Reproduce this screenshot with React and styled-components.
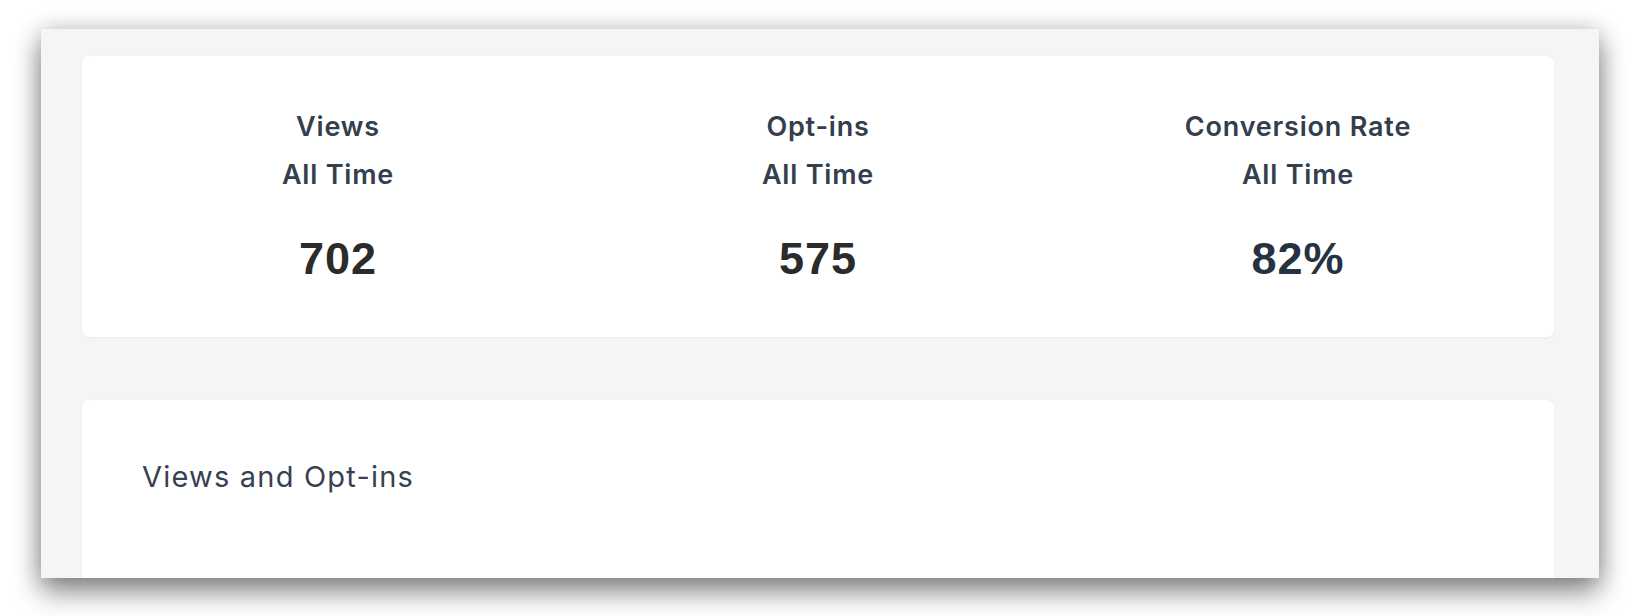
import React from "react";
import styled, { createGlobalStyle } from "styled-components";

const GlobalStyle = createGlobalStyle`
  html, body {
    margin: 0;
    padding: 0;
    background: #ffffff;
    font-family: Inter, "Noto Sans", sans-serif;
  }
`;

const Page = styled.div`
  height: 616px;
  padding: 29px 35px 0 41px;
  box-sizing: border-box;
  overflow: hidden;
`;

const Window = styled.div`
  height: 549px;
  box-sizing: border-box;
  background: #f4f5f7;
  padding: 27px 45px 0 41px;
  display: flex;
  flex-direction: column;
  gap: 63px;
  overflow: hidden;
  box-shadow: 0 14px 26px rgba(0, 0, 0, 0.45), 0 0 22px rgba(0, 0, 0, 0.18);
`;

const Card = styled.div`
  background: #ffffff;
  border-radius: 8px;
  box-shadow: 0 1px 3px rgba(0, 0, 0, 0.04);
`;

const StatsCard = styled(Card)`
  height: 281px;
  box-sizing: border-box;
  padding: 16px;
  display: grid;
  grid-template-columns: repeat(3, 1fr);
`;

const Stat = styled.div`
  padding-top: 31px;
  text-align: center;
`;

const Label = styled.div`
  font-size: 27px;
  font-weight: 600;
  line-height: 48px;
  letter-spacing: 0.8px;
  color: #343e4d;
`;

const Value = styled.div`
  margin-top: 32px;
  font-family: "Liberation Sans", Arial, sans-serif;
  font-size: 45px;
  font-weight: 700;
  line-height: 56px;
  letter-spacing: 1px;
  color: ${(p) => (p.$accent ? "#263242" : "#2b2b2b")};
`;

const ChartCard = styled(Card)`
  flex: 1;
  border-radius: 8px 8px 0 0;
  padding: 57px 60px 0;
`;

const ChartTitle = styled.div`
  font-size: 29px;
  font-weight: 400;
  line-height: 40px;
  letter-spacing: 1.2px;
  color: #374151;
`;

const stats = [
  { title: "Views", value: "702" },
  { title: "Opt-ins", value: "575" },
  { title: "Conversion Rate", value: "82%", accent: true },
];

const App = () => {
  return (
    <>
      <GlobalStyle />
      <Page>
        <Window>
          <StatsCard>
            {stats.map((s) => (
              <Stat key={s.title}>
                <Label>{s.title}</Label>
                <Label>All Time</Label>
                <Value $accent={s.accent}>{s.value}</Value>
              </Stat>
            ))}
          </StatsCard>
          <ChartCard>
            <ChartTitle>Views and Opt-ins</ChartTitle>
          </ChartCard>
        </Window>
      </Page>
    </>
  );
};

export default App;
